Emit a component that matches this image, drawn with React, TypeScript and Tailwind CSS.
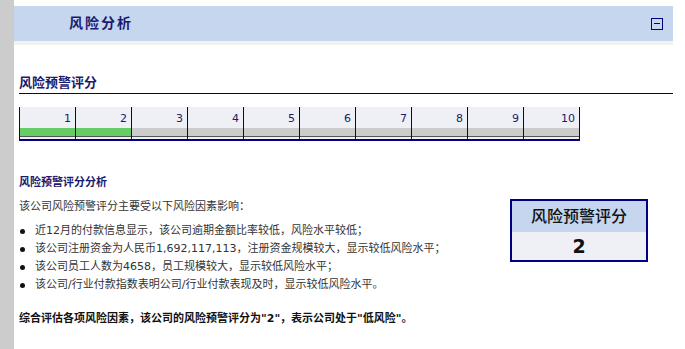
const font = { fontFamily: '"DejaVu Sans", "Noto Sans CJK SC", sans-serif' };

const factors = [
  '近12月的付款信息显示，该公司逾期金额比率较低，风险水平较低；',
  '该公司注册资金为人民币1,692,117,113，注册资金规模较大，显示较低风险水平；',
  '该公司员工人数为4658，员工规模较大，显示较低风险水平；',
  '该公司/行业付款指数表明公司/行业付款表现及时，显示较低风险水平。',
];

const score = 2;

export default function App() {
  return (
    <div className="flex h-[349px] w-[685px] bg-white" style={font}>
      <div className="w-[14px] shrink-0 bg-[#cccccc]" />
      <div className="w-[659px] shrink-0">
        <div className="mt-[6px] flex h-[35px] items-center justify-between bg-[#c6d6ee] pl-[55px] pr-[10px]">
          <h1 className="text-[14px] font-bold tracking-[2px] text-[#1a1a6e]">风险分析</h1>
          <div className="flex h-[12px] w-[12px] items-center justify-center border border-[#000080]">
            <div className="h-[1.5px] w-[6px] bg-[#000080]" />
          </div>
        </div>
        <div className="h-[4px] bg-[#f2f2f2]" />

        <div className="pl-[5px]">
          <h2 className="mt-[30px] border-b border-[#000080] pb-[2px] text-[13px] font-bold leading-[16px] text-[#1a1a6e]">
            风险预警评分
          </h2>

          <div className="mt-[13px] flex w-[561px] border-b-2 border-[#000080]">
            {Array.from({ length: 10 }, (_, i) => (
              <div key={i} className="flex-1 border-l border-[#000080] last:border-r">
                <div className="h-[21px] bg-[#eef0f5] pr-[4px] pt-[5px] text-right text-[11px] leading-[14px] text-[#1a1a6e]">
                  {i + 1}
                </div>
                <div className={`h-[9px] border-b border-[#555] ${i < score ? 'bg-[#66cc66]' : 'bg-[#cccccc]'}`} />
                <div className="h-[2px] bg-[#eef0f5]" />
              </div>
            ))}
          </div>

          <h3 className="mt-[35px] text-[11px] font-bold leading-[14px] text-[#1a1a6e]">风险预警评分分析</h3>

          <div className="flex">
            <div className="w-[480px]">
              <p className="mt-[9px] text-[11px] leading-[15px] text-[#333]">该公司风险预警评分主要受以下风险因素影响：</p>
              <ul className="mt-[8px]">
                {factors.map(f => (
                  <li key={f} className="flex items-center text-[11px] leading-[18px] text-[#333]">
                    <span className="ml-[1px] mr-[10px] h-[5px] w-[5px] rounded-full bg-[#111]" />
                    {f}
                  </li>
                ))}
              </ul>
            </div>
            <div className="ml-[11px] mt-[9px] h-[63px] w-[138px] border-2 border-[#000080]">
              <div className="flex h-[31px] items-center justify-center bg-[#c6d6ee] text-[16px] font-medium text-[#111]">风险预警评分</div>
              <div className="flex h-[28px] items-center justify-center bg-[#eef0f5] text-[19px] font-bold text-[#111]">{score}</div>
            </div>
          </div>

          <p className="mt-[17px] text-[11px] font-bold leading-[15px] text-[#111]">
            综合评估各项风险因素，该公司的风险预警评分为"2"，表示公司处于"低风险"。
          </p>
        </div>
      </div>
    </div>
  );
}
